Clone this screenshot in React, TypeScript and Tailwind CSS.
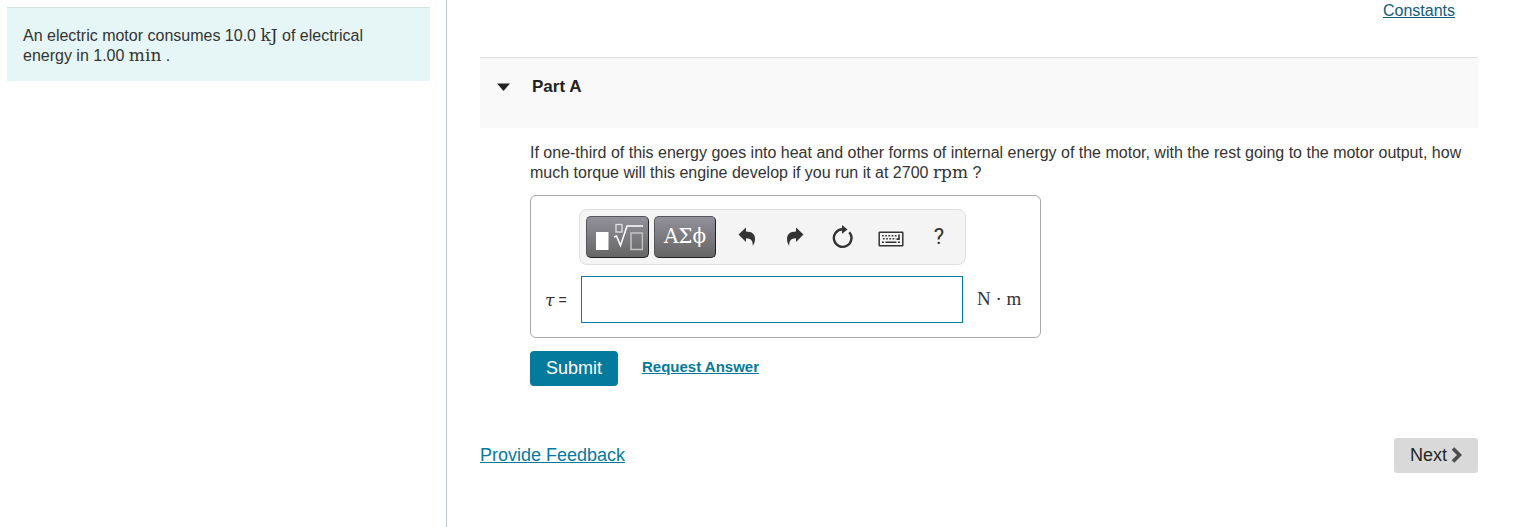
import { useState } from 'react';

interface UnitProps {
  children: React.ReactNode;
}

// Upright serif text used for physical units
const Unit: React.FC<UnitProps> = ({ children }) => (
  <span className="font-['DejaVu_Serif',serif] text-[17px] leading-none">{children}</span>
);

const TemplateIcon = () => (
  <svg width="51" height="28" viewBox="0 0 51 28" fill="none" aria-hidden="true">
    <rect x="4" y="9" width="12.500" height="18" fill="#fff" />
    <rect x="24" y="1.500" width="6" height="7.500" stroke="#dcdcde" strokeWidth="1.400" />
    <path d="M22 14l2.500-1 4 9.500 6.500-19.500h16" stroke="#fff" strokeWidth="1.500" />
    <rect x="39" y="10" width="11.500" height="16.500" stroke="#c4c4c6" strokeWidth="1.500" />
  </svg>
);

const UndoIcon = () => (
  <svg width="18" height="20" viewBox="0 0 18 20" fill="#333" aria-hidden="true">
    <path d="M0.500 7.500L8 0.500v4.100c6 0 9 2.800 9 7.200 0 2.900-.8 5-2.200 7.300.3-5.100-1.800-7.800-6.800-7.800v3.600z" />
  </svg>
);

const RedoIcon = () => (
  <svg width="18" height="20" viewBox="0 0 18 20" fill="#333" aria-hidden="true">
    <path d="M17.500 7.500L10 .5v4.100C4 4.600 1 7.400 1 11.800c0 2.900.8 5 2.200 7.300C2.900 14 5 11.300 10 11.300v3.600z" />
  </svg>
);

const ResetIcon = () => (
  <svg width="22" height="24" viewBox="0 0 22 24" fill="none" aria-hidden="true">
    <path d="M17.300 7.200A8.800 8.800 0 1 1 10.500 4.200" stroke="#333" strokeWidth="2.400" />
    <path d="M10 0l5.500 4.500-5.500 4.200z" fill="#333" />
  </svg>
);

const KeyboardIcon = () => (
  <svg width="26" height="16" viewBox="0 0 26 16" fill="none" aria-hidden="true">
    <rect x="1.200" y="1.200" width="23.600" height="13.600" rx="0.500" stroke="#333" strokeWidth="1.500" />
    <path d="M4 4.800h15M5 7.800h13" stroke="#333" strokeWidth="1.600" strokeDasharray="1.700 1.500" />
    <path d="M4 11.300h2M7.500 11.300h11M20 11.300h2M21 3.500v4.600h-2.500" stroke="#333" strokeWidth="1.600" />
  </svg>
);

const darkButton =
  'flex h-[42px] shrink-0 items-center justify-center rounded-[5px] border border-[#55555a] border-r-[#222] border-b-[#222] bg-gradient-to-b from-[#92919a] to-[#666] text-white';
const iconButton = 'flex h-10 w-12 items-center justify-center text-[#333]';

const App: React.FC = () => {
  const [open, setOpen] = useState(true);
  const [answer, setAnswer] = useState('');

  return (
    <div className="flex min-h-screen bg-white font-['Liberation_Sans',Arial,sans-serif] text-base leading-5 text-[#333]">
      {/* Problem statement */}
      <aside className="w-[447px] shrink-0 border-r border-[#b7cbdb] py-[7px] pr-4 pl-[7px]">
        <p className="border-t border-[#d5e3e3] bg-[#e6f6f6] px-4 pt-[18px] pb-[15px]">
          An electric motor consumes 10.0 <Unit>kJ</Unit> of electrical energy in 1.00 <Unit>min</Unit> .
        </p>
      </aside>

      <main className="flex-1 pr-[47px] pl-[33px]">
        <div className="flex h-[57px] justify-end pt-px pr-[23px]">
          <a href="#constants" className="h-5 text-[#0f5d78] underline">
            Constants
          </a>
        </div>

        {/* Part header */}
        <h2 className="h-[71px] border-t border-[#dcdcdc] bg-[#f9f9f9] px-4 pt-[19px]">
          <button
            type="button"
            aria-expanded={open}
            onClick={() => setOpen(!open)}
            className="flex items-center gap-[21px] text-[17px] leading-5 font-bold text-[#222]"
          >
            <svg width="15" height="9" viewBox="0 0 15 9" aria-hidden="true">
              <path d="M1 .500h13L7.500 8z" fill="#222" />
            </svg>
            Part A
          </button>
        </h2>

        {open && (
          <section className="pt-[15px] pl-[50px]">
            <p>
              If one-third of this energy goes into heat and other forms of internal energy of the motor, with the
              rest going to the motor output, how much torque will this engine develop if you run it at 2700{' '}
              <Unit>rpm</Unit> ?
            </p>

            {/* Answer box */}
            <div className="mt-3 w-fit rounded-md border border-[#a9a9a9] pt-[13px] pr-[18px] pb-[14px] pl-[14px]">
              <div className="ml-[34px] flex h-14 w-[387px] items-center gap-[5px] rounded-lg border border-[#dedede] bg-[#f4f4f4] pl-1.5">
                <button type="button" aria-label="Templates" className={`${darkButton} w-[63px]`}>
                  <TemplateIcon />
                </button>
                <button
                  type="button"
                  aria-label="Symbols"
                  className={`${darkButton} w-[62px] pb-0.5 font-['DejaVu_Serif',serif] text-[20px]`}
                >
                  ΑΣϕ
                </button>
                <div className="ml-0.5 flex">
                  <button type="button" aria-label="Undo" className={iconButton}>
                    <UndoIcon />
                  </button>
                  <button type="button" aria-label="Redo" className={iconButton}>
                    <RedoIcon />
                  </button>
                  <button type="button" aria-label="Reset" className={iconButton}>
                    <ResetIcon />
                  </button>
                  <button type="button" aria-label="Keyboard shortcuts" className={`${iconButton} pt-1`}>
                    <KeyboardIcon />
                  </button>
                  <button type="button" aria-label="Help" className={`${iconButton} font-[Roboto,sans-serif] text-[22px]`}>
                    ?
                  </button>
                </div>
              </div>

              <div className="mt-[11px] flex items-center">
                <label htmlFor="answer" className="flex w-9 items-center gap-1 text-sm whitespace-nowrap">
                  <i className="font-['DejaVu_Serif',serif] text-[17px] leading-5">τ</i>
                  <span>=</span>
                </label>
                <input
                  id="answer"
                  type="text"
                  value={answer}
                  onChange={(e) => setAnswer(e.target.value)}
                  className="h-[47px] w-[382px] border border-[#007fa3] bg-white px-2 outline-none"
                />
                <span className="ml-[14px] w-[45px] pb-0.5 font-['Liberation_Serif',serif] text-[19px] whitespace-nowrap">
                  N · m
                </span>
              </div>
            </div>

            <div className="mt-[13px] flex items-center gap-6">
              <button type="submit" className="h-[35px] rounded-sm bg-[#047a9c] px-4 pb-0.5 text-lg leading-5 text-white">
                Submit
              </button>
              <a href="#answer" className="pb-1 text-[15px] font-bold text-[#047a9c] underline">
                Request Answer
              </a>
            </div>
          </section>
        )}

        <div className="mt-[52px] flex items-center justify-between">
          <a href="#feedback" className="pb-0.5 text-lg leading-5 text-[#047a9c] underline">
            Provide Feedback
          </a>
          <button
            type="button"
            className="flex h-[35px] items-center gap-1 rounded-[3px] bg-[#d9d9d9] px-4 pb-0.5 text-lg leading-5 text-[#252525]"
          >
            Next
            <svg width="11" height="16" viewBox="0 0 11 16" fill="none" aria-hidden="true">
              <path d="M2 1.500l6.500 6.500L2 14.500" stroke="#4d4d4d" strokeWidth="3.600" />
            </svg>
          </button>
        </div>
      </main>
    </div>
  );
};

export default App;
